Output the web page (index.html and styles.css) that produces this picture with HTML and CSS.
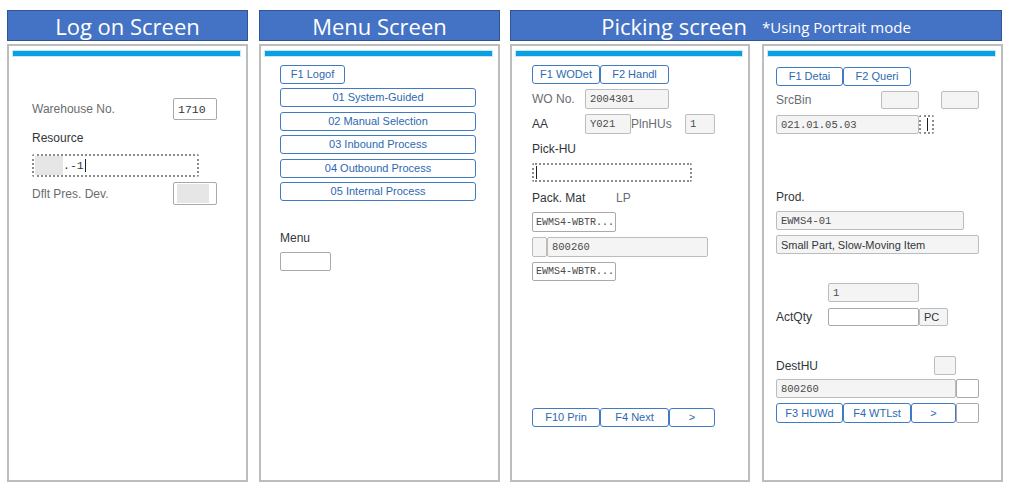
FILE: index.html
```html
<!DOCTYPE html>
<html lang="en">
<head>
<meta charset="utf-8">
<title>RF Screens</title>
<link rel="stylesheet" href="styles.css">
</head>
<body>
<div class="page">
  <section class="col col-single">
    <header class="title"><span class="title-main">Log on Screen</span></header>
    <div class="panel">
      <div class="stripe"></div>
      <div class="body logon">
        <div class="row r-wh">
          <span class="lbl muted w141">Warehouse No.</span>
          <span class="fld white mono big w44">1710</span>
        </div>
        <div class="row r-res-label"><span class="lbl">Resource</span></div>
        <div class="row r-res-input">
          <span class="fld focus w167"><span class="mask m-res"></span><span class="mono big">.-1</span><span class="caret"></span></span>
        </div>
        <div class="row r-dflt">
          <span class="lbl muted w141">Dflt Pres. Dev.</span>
          <span class="fld white w44"><span class="mask m-dflt"></span></span>
        </div>
      </div>
    </div>
  </section>

  <section class="col col-single">
    <header class="title"><span class="title-main">Menu Screen</span></header>
    <div class="panel">
      <div class="stripe"></div>
      <div class="body menu">
        <div class="row r-logof"><button class="btn w65">F1 Logof</button></div>
        <div class="menu-list">
          <button class="btn menu-btn">01 System-Guided</button>
          <button class="btn menu-btn">02 Manual Selection</button>
          <button class="btn menu-btn">03 Inbound Process</button>
          <button class="btn menu-btn">04 Outbound Process</button>
          <button class="btn menu-btn">05 Internal Process</button>
        </div>
        <div class="row r-menu-label"><span class="lbl">Menu</span></div>
        <div class="row r-menu-input"><span class="fld white w51"></span></div>
      </div>
    </div>
  </section>

  <section class="col col-double">
    <header class="title"><span class="title-main">Picking screen</span><span class="title-note">*Using Portrait mode</span></header>
    <div class="pair">
      <div class="panel narrow">
        <div class="stripe"></div>
        <div class="body pick1">
          <div class="row p1-btns"><button class="btn w68">F1 WODet</button><button class="btn w69">F2 Handl</button></div>
          <div class="row p1-wo"><span class="lbl muted w53">WO No.</span><span class="fld gray mono w84">2004301</span></div>
          <div class="row p1-aa"><span class="lbl w53">AA</span><span class="fld gray mono w46">Y021</span><span class="lbl muted w54">PlnHUs</span><span class="fld gray mono w30">1</span></div>
          <div class="row p1-hul"><span class="lbl">Pick-HU</span></div>
          <div class="row p1-hui"><span class="fld focus w160"><span class="caret"></span></span></div>
          <div class="row p1-pack"><span class="lbl w84">Pack. Mat</span><span class="lbl muted">LP</span></div>
          <div class="row p1-e1"><span class="fld white mono tight w84">EWMS4-WBTR...</span></div>
          <div class="row p1-lp"><span class="fld gray w15"></span><span class="fld gray mono w161">800260</span></div>
          <div class="row p1-e2"><span class="fld white mono tight w84">EWMS4-WBTR...</span></div>
          <div class="row p1-foot"><button class="btn w68">F10 Prin</button><button class="btn w69">F4 Next</button><button class="btn w46">&gt;</button></div>
        </div>
      </div>

      <div class="panel">
        <div class="stripe"></div>
        <div class="body pick2">
          <div class="row p2-btns"><button class="btn w67">F1 Detai</button><button class="btn w68">F2 Queri</button></div>
          <div class="row p2-src"><span class="lbl muted w105">SrcBin</span><span class="fld gray w38"></span><span class="fld gray w38 gap22"></span></div>
          <div class="row p2-bin"><span class="fld gray mono w143">021.01.05.03</span><span class="fld focus w15 caret-box"><span class="caret"></span></span></div>
          <div class="row p2-prodl"><span class="lbl">Prod.</span></div>
          <div class="row p2-prod"><span class="fld gray mono w188">EWMS4-01</span></div>
          <div class="row p2-desc"><span class="fld gray sans w203">Small Part, Slow-Moving Item</span></div>
          <div class="row p2-qty"><span class="fld gray mono w91 indent52">1</span></div>
          <div class="row p2-act"><span class="lbl w52">ActQty</span><span class="fld white w91"></span><span class="fld gray sans w29">PC</span></div>
          <div class="row p2-dest"><span class="lbl w158">DestHU</span><span class="fld gray w22"></span></div>
          <div class="row p2-hu"><span class="fld gray mono w180">800260</span><span class="fld white w23"></span></div>
          <div class="row p2-foot"><button class="btn w67">F3 HUWd</button><button class="btn w68">F4 WTLst</button><button class="btn w45">&gt;</button><span class="fld white w23"></span></div>
        </div>
      </div>
    </div>
  </section>
</div>
</body>
</html>
```

FILE: styles.css
```css
* { box-sizing: border-box; }

html, body {
  margin: 0;
  padding: 0;
  background: #ffffff;
}

body {
  font-family: "Liberation Sans", Arial, sans-serif;
  color: #32363a;
}

.page {
  display: flex;
  padding: 10px 0 0 7px;
}

.col { display: flex; flex-direction: column; }
.col-single { width: 241px; }
.col-single + .col-single { margin-left: 11px; }
.col-double { width: 493px; margin-left: 10px; }

.title {
  height: 31px;
  margin-bottom: 3px;
  background: #4472c4;
  border: 1px solid #2f5597;
  color: #ffffff;
  font-family: "Open Sans", "Noto Sans", sans-serif;
  display: flex;
  align-items: center;
  justify-content: center;
  gap: 15px;
  white-space: nowrap;
}
.col-double .title { width: 492px; }

.title-main { font-size: 22px; line-height: 1; }
.title-note { font-size: 15px; line-height: 1; padding-top: 4px; }

.pair { display: flex; gap: 12px; }

.panel {
  height: 438px;
  width: 241px;
  border: 2px solid #bdbdbd;
  display: flex;
  flex-direction: column;
}
.panel.narrow { width: 240px; }

.stripe {
  margin: 5px 6px 0 4px;
  height: 5px;
  background: #08a0e1;
  box-shadow: 0 0 0 1px #c6e7f7;
  flex: none;
}

.body { display: flex; flex-direction: column; }
.logon { padding-left: 23px; }
.menu { padding-left: 19px; }
.pick1 { padding-left: 20px; }
.pick2 { padding-left: 12px; }

.row {
  display: flex;
  align-items: center;
  flex: none;
}

.lbl {
  font-size: 12px;
  line-height: 16px;
  color: #32363a;
  white-space: nowrap;
  flex: none;
}
.lbl.muted { color: #6a6d70; }

.fld {
  flex: none;
  height: 100%;
  border: 1px solid #bcbcbc;
  border-radius: 2px;
  display: flex;
  align-items: center;
  padding: 0 4px;
  font-size: 11px;
  color: #32363a;
  white-space: nowrap;
  overflow: hidden;
}
.fld.white { background: #ffffff; border-color: #a9a9a9; }
.fld.gray { background: #f4f4f4; }
.fld.focus {
  background: #ffffff;
  border: 2px dotted #8c8c8c;
  padding: 0 1px;
}
.fld.tight { padding: 0 0 0 3px; font-size: 10px; }
.caret-box { justify-content: center; }

.mono {
  font-family: "Liberation Mono", "DejaVu Sans Mono", monospace;
  font-size: 10.5px;
  color: #4a4a4a;
}
.mono.big { font-size: 11.5px; color: #32363a; }
.sans { font-family: "Liberation Sans", Arial, sans-serif; font-size: 11px; }

.mask { display: block; height: 100%; background: #e6e6e6; flex: none; }
.m-res { width: 28px; }
.m-dflt { width: 32px; margin-left: -1px; height: 19px; }

.caret {
  display: inline-block;
  width: 1px;
  height: 13px;
  background: #1f1f1f;
  margin-left: 1px;
}

.btn {
  flex: none;
  height: 100%;
  margin: 0;
  padding: 0;
  background: #ffffff;
  border: 1px solid #3f7bc2;
  border-radius: 3px;
  color: #2d69b1;
  font-family: "Liberation Sans", Arial, sans-serif;
  font-size: 11px;
  line-height: 1;
  cursor: pointer;
}

/* widths */
.w15 { width: 15px; }
.w22 { width: 22px; }
.w23 { width: 23px; }
.w29 { width: 29px; }
.w30 { width: 30px; }
.w38 { width: 38px; }
.w44 { width: 44px; }
.w45 { width: 45px; }
.w46 { width: 46px; }
.w51 { width: 51px; }
.w52 { width: 52px; }
.w53 { width: 53px; }
.w54 { width: 54px; }
.w65 { width: 65px; }
.w67 { width: 67px; }
.w68 { width: 68px; }
.w69 { width: 69px; }
.w84 { width: 84px; }
.w91 { width: 91px; }
.w105 { width: 105px; }
.w141 { width: 141px; }
.w143 { width: 143px; }
.w158 { width: 158px; }
.w160 { width: 160px; }
.w161 { width: 161px; }
.w167 { width: 167px; }
.w180 { width: 180px; }
.w188 { width: 188px; }
.w203 { width: 203px; }
.gap22 { margin-left: 22px; }
.indent52 { margin-left: 52px; }

/* log on rows */
.r-wh { margin-top: 42px; height: 22px; }
.r-res-label { margin-top: 10px; height: 16px; }
.r-res-input { margin-top: 8px; height: 23px; }
.r-dflt { margin-top: 5px; height: 23px; }

/* menu rows */
.r-logof { margin-top: 9px; height: 19px; }
.menu-list {
  margin-top: 4px;
  display: flex;
  flex-direction: column;
  gap: 4.5px;
}
.menu-btn { width: 196px; height: 19px; }
.r-menu-label { margin-top: 29px; height: 16px; }
.r-menu-input { margin-top: 6px; height: 19px; }

/* picking 1 rows */
.p1-btns { margin-top: 9px; height: 19px; }
.p1-wo { margin-top: 5px; height: 20px; }
.p1-aa { margin-top: 5px; height: 20px; }
.p1-hul { margin-top: 7px; height: 16px; }
.p1-hui { margin-top: 6px; height: 19px; }
.p1-pack { margin-top: 8px; height: 16px; }
.p1-e1 { margin-top: 6px; height: 20px; }
.p1-lp { margin-top: 5px; height: 20px; }
.p1-e2 { margin-top: 5px; height: 19px; }
.p1-foot { margin-top: 127px; height: 19px; }

/* picking 2 rows */
.p2-btns { margin-top: 11px; height: 19px; }
.p2-src { margin-top: 5px; height: 18px; }
.p2-bin { margin-top: 6px; height: 19px; }
.p2-prodl { margin-top: 55px; height: 16px; }
.p2-prod { margin-top: 6px; height: 19px; }
.p2-desc { margin-top: 5px; height: 19px; }
.p2-qty { margin-top: 29px; height: 19px; }
.p2-act { margin-top: 6px; height: 18px; }
.p2-dest { margin-top: 30px; height: 19px; }
.p2-hu { margin-top: 4px; height: 19px; }
.p2-foot { margin-top: 5px; height: 20px; }
```
